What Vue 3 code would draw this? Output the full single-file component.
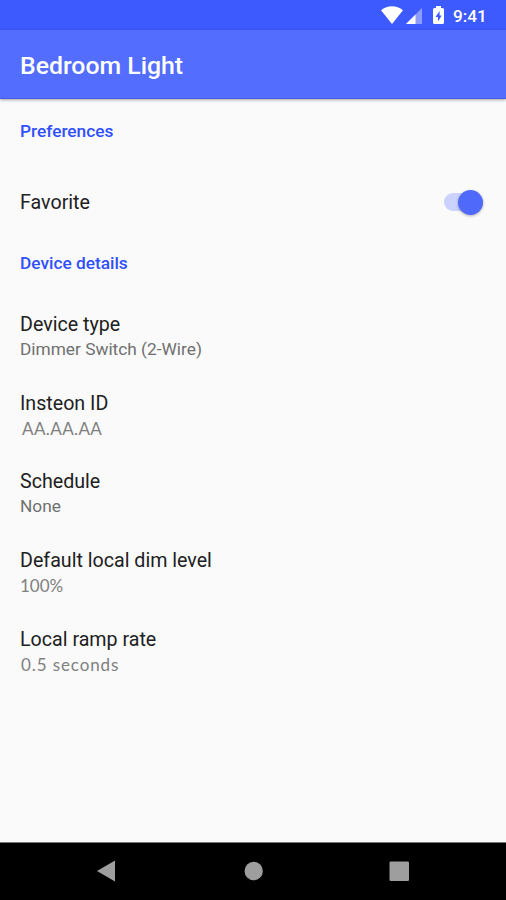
<script setup>
import { ref } from 'vue'

const favorite = ref(true)
const details = [
  { key: 'type', title: 'Device type', value: 'Dimmer Switch (2-Wire)' },
  { key: 'insteon', title: 'Insteon ID', value: 'AA.AA.AA' },
  { key: 'schedule', title: 'Schedule', value: 'None' },
  { key: 'dim', title: 'Default local dim level', value: '100%' },
  { key: 'ramp', title: 'Local ramp rate', value: '0.5 seconds' },
]
</script>

<template>
  <div class="screen">
    <div class="status">
      <svg class="signals" width="64" height="20" viewBox="381 5 64 20">
        <path d="M381 10.2C387.500 4.900 396.500 4.900 403 10.200L392 24Z" fill="#fff" />
        <path d="M422 8V24H406Z" fill="#8c9dff" />
        <path d="M415.500 14.500V24H406Z" fill="#fff" />
        <path
          fill-rule="evenodd"
          d="M436 6H441V8H442.500Q444 8 444 9.500V22.500Q444 24 442.500 24H434.500Q433 24 433 22.500V9.500Q433 8 434.500 8H436ZM439.600 11L435.500 17H438V21.500L441.700 15.500H439.600Z"
          fill="#fff"
        />
      </svg>
      <span class="time">9:41</span>
    </div>
    <header class="toolbar"><h1>Bedroom Light</h1></header>
    <main class="content">
      <h2 class="preferences">Preferences</h2>
      <div class="favorite">
        <span class="title favorite-label">Favorite</span>
        <button
          class="switch"
          :class="{ on: favorite }"
          role="switch"
          :aria-checked="favorite"
          @click="favorite = !favorite"
        >
          <span class="thumb"></span>
        </button>
      </div>
      <h2 class="device">Device details</h2>
      <div class="rows">
        <div v-for="item in details" :key="item.key" class="row" :class="item.key">
          <div class="title">{{ item.title }}</div>
          <div class="value">{{ item.value }}</div>
        </div>
      </div>
    </main>
    <nav class="nav">
      <svg width="506" height="57" viewBox="0 843 506 57" fill="#9e9e9e">
        <path d="M97 871L115 860.500V881.500Z" />
        <circle cx="253.700" cy="871" r="9.200" />
        <rect x="389.500" y="861.500" width="19.500" height="19.500" rx="1.300" />
      </svg>
    </nav>
  </div>
</template>

<style>
body {
  margin: 0;
}
</style>

<style scoped>
.screen {
  width: 506px;
  height: 900px;
  display: flex;
  flex-direction: column;
  overflow: hidden;
  background: #fafafa;
  color: #212121;
  font-family: Roboto, sans-serif;
}
.status {
  height: 30px;
  flex: none;
  box-sizing: border-box;
  padding: 0 19px 0 381px;
  display: flex;
  align-items: center;
  gap: 8px;
  background: #3d5afe;
  color: #fff;
}
.signals {
  flex: none;
}
.time {
  font-size: 17.2px;
  line-height: 20px;
  font-weight: 500;
  padding-top: 2px;
}
.toolbar {
  height: 69px;
  flex: none;
  box-sizing: border-box;
  padding: 3px 20px 0;
  display: flex;
  align-items: center;
  background: #536dfe;
  border-bottom: 1px solid #465fe0;
  box-shadow: 0 1px 3px rgba(0, 0, 0, 0.35);
  z-index: 1;
}
h1 {
  margin: 0;
  color: #fff;
  font-size: 24.8px;
  line-height: 30px;
  font-weight: 500;
}
.content {
  flex: 1;
  min-height: 0;
  padding: 0 23px 0 20px;
}
h2 {
  margin: 0;
  color: #304ffe;
  font-size: 17.3px;
  line-height: 22px;
  font-weight: 500;
}
.preferences {
  padding-top: 21px;
}
.favorite {
  height: 32px;
  margin-top: 44px;
  display: flex;
  align-items: center;
  justify-content: space-between;
}
.favorite-label {
  padding-top: 2px;
}
.switch {
  width: 39px;
  height: 18px;
  padding: 0;
  border: 0;
  border-radius: 9px;
  background: #cbd2fd;
  display: flex;
  align-items: center;
  justify-content: flex-start;
}
.switch.on {
  justify-content: flex-end;
}
.thumb {
  width: 25px;
  height: 25px;
  flex: none;
  border-radius: 50%;
  background: #4f69fa;
  box-shadow: 0 1px 3px rgba(0, 0, 0, 0.3);
}
.device {
  margin-top: 34px;
}
.rows {
  margin-top: 37px;
}
.row {
  height: 78.650px;
}
.title {
  font-size: 19.650px;
  line-height: 28px;
}
.value {
  font-size: 17.300px;
  line-height: 20px;
  color: #707070;
}
.insteon .value,
.dim .value,
.ramp .value {
  font-family: Lato, sans-serif;
  font-size: 17px;
  line-height: 22px;
  color: #808080;
}
.insteon .value {
  padding-left: 2px;
  letter-spacing: 0.4px;
}
.ramp .value {
  padding-left: 1px;
  letter-spacing: 0.9px;
}
.nav {
  height: 58px;
  flex: none;
  box-sizing: border-box;
  border-top: 1px solid #777;
  background: #000;
}
.nav svg {
  display: block;
}
</style>
